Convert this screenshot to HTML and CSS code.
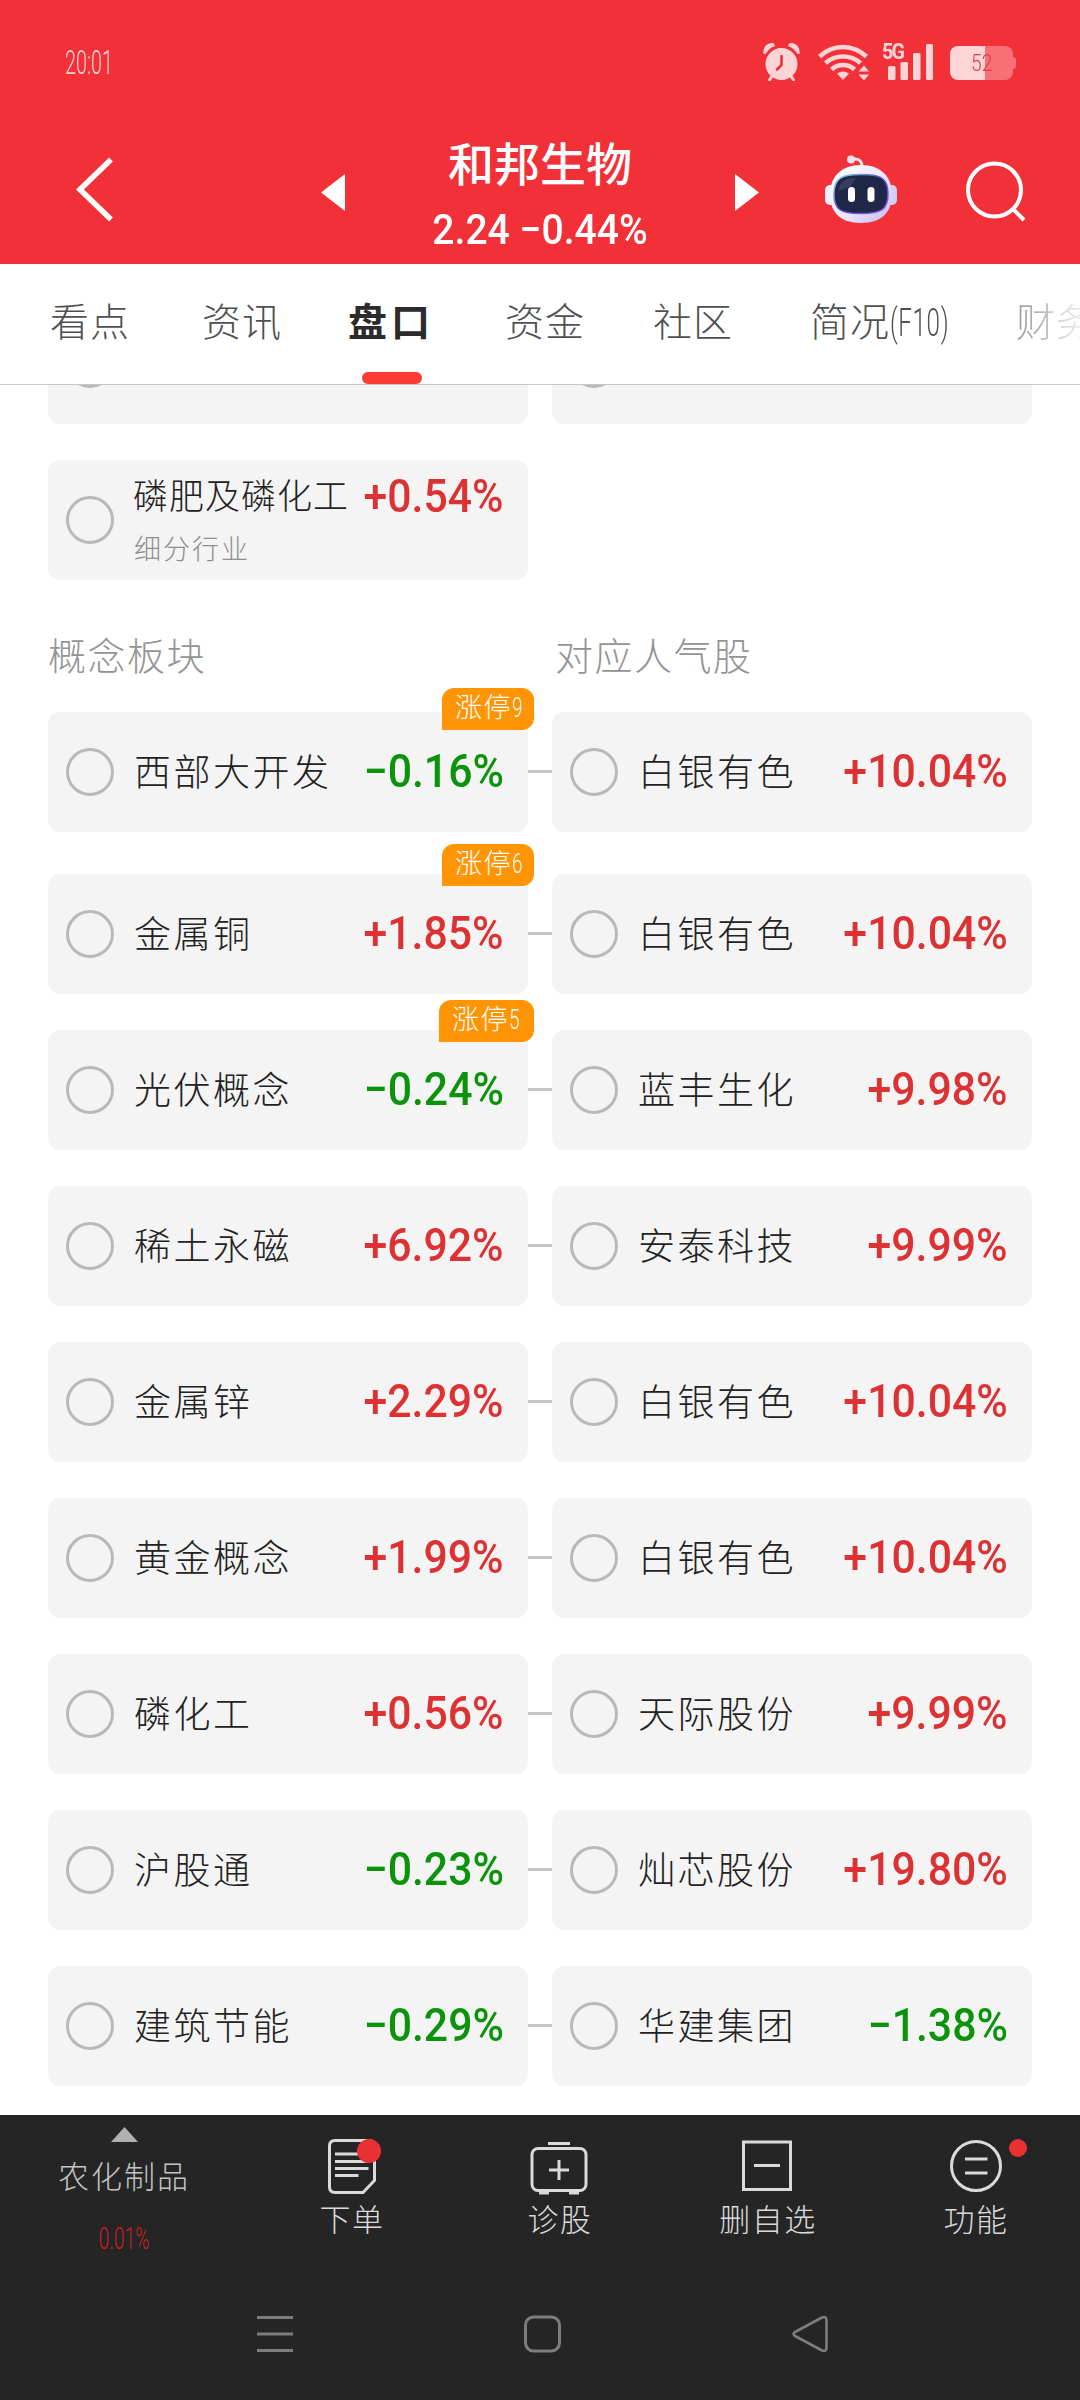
FILE: index.html
```html
<!DOCTYPE html>
<html lang="zh-CN">
<head>
<meta charset="utf-8">
<title>和邦生物</title>
<link rel="stylesheet" href="styles.css">
</head>
<body>
<div class="screen">
  <header class="header">
    <div class="status">
      <div class="time"><span class="narrow">20:01</span></div>
      <div class="status-icons">
        <svg class="alarm" width="37" height="38" viewBox="0 0 37 38" fill="#fdd5d7">
          <circle cx="18.5" cy="21" r="16"/>
          <path d="M1 10Q1 1 10 .5L11 2.500Q5 5 2.500 10ZM36 10Q36 1 27 .5L26 2.500Q32 5 34.500 10Z" stroke="#fdd5d7" stroke-width="1.500"/>
          <path d="M9 33 6.500 37M28 33 30.500 37" stroke="#fdd5d7" stroke-width="3" stroke-linecap="round"/>
          <path d="M18.500 13V22L14 26.500" fill="none" stroke="#f23037" stroke-width="2.600" stroke-linecap="round" stroke-linejoin="round"/>
        </svg>
        <svg class="wifi" width="51" height="37" viewBox="0 0 51 37" fill="none" stroke="#fdd5d7" stroke-width="4.600">
          <path d="M1.500 12.500Q12 3 25 3T48.500 12.500M7.500 19Q15 12.500 25 12.500T42.500 19M13.500 25.500Q18 21 25 21T36.500 25.500"/>
          <path d="M19 29.500Q25 25.500 31 29.500L25 36Z" fill="#fdd5d7" stroke="none"/>
          <path d="M40.500 27.500 46 21.500 51 27.500ZM40.500 30.500 46 36.500 51 30.500Z" fill="#fdd5d7" stroke="none"/>
        </svg>
        <div class="signal">
          <span class="net">5G</span>
          <svg width="45" height="36" viewBox="0 0 45 36" fill="#fdd5d7">
            <rect y="22" width="7.500" height="14" rx="1.500"/><rect x="12.500" y="18" width="7.500" height="18" rx="1.500"/><rect x="25" y="9" width="7.500" height="27" rx="1.500"/><rect x="38" width="7" height="36" rx="1.500"/>
          </svg>
        </div>
        <div class="battery"><span class="narrow">52</span></div>
      </div>
    </div>
    <div class="titlebar">
      <svg class="back" width="40" height="68" viewBox="0 0 40 68" fill="none" stroke="#fff" stroke-width="5.500"><path d="M36 3.500 5 33.500 36 63.500"/></svg>
      <svg class="prev" width="24" height="37" viewBox="0 0 24 37" fill="#fff"><path d="M24 0V37L0 18.500Z"/></svg>
      <div class="title">
        <h1>和邦生物</h1>
        <p>2.24 −0.44%</p>
      </div>
      <svg class="next" width="24" height="37" viewBox="0 0 24 37" fill="#fff"><path d="M0 0V37L24 18.500Z"/></svg>
      <svg class="robot" width="72" height="70" viewBox="0 0 72 70">
        <defs>
          <linearGradient id="shell" x1="0" y1="0" x2="1" y2="1"><stop offset="0" stop-color="#fff"/><stop offset=".55" stop-color="#ece8fb"/><stop offset="1" stop-color="#c0b9ed"/></linearGradient>
          <linearGradient id="rim" x1="0" y1="0" x2="1" y2="1"><stop offset="0" stop-color="#8fe0f5"/><stop offset=".5" stop-color="#5949c9"/><stop offset="1" stop-color="#9a55e0"/></linearGradient>
        </defs>
        <path d="M28 5Q37 4 37 13" fill="none" stroke="#efeaf8" stroke-width="3"/>
        <circle cx="26" cy="5.500" r="4" fill="#f8dfe8"/>
        <rect x="0" y="31" width="12" height="20" rx="5" fill="#f1efff"/><rect x="60" y="31" width="12" height="20" rx="5" fill="#d3cff3"/>
        <path d="M36 11C57 11 67 24 67 40C67 58 57 69 36 69S5 58 5 40C5 24 15 11 36 11Z" fill="url(#shell)"/>
        <path d="M36 20.500C54 20.500 63 23 63 40C63 56 56 59.500 36 59.500S9 56 9 40C9 23 18 20.500 36 20.500Z" fill="#1f2848" stroke="url(#rim)" stroke-width="1.500"/>
        <path d="M13 37Q15 24 31 24L25 33Q18 35 13 37Z" fill="#4a526f" opacity=".55"/>
        <rect x="23" y="33" width="7" height="15" rx="3.500" fill="#fff"/><rect x="42.500" y="33" width="7" height="15" rx="3.500" fill="#fff"/>
      </svg>
      <svg class="search" width="60" height="62" viewBox="0 0 60 62" fill="none" stroke="#fff" stroke-width="4"><circle cx="28.500" cy="30" r="26.500"/><path d="M47 49 58 60"/></svg>
    </div>
  </header>

  <nav class="tabs">
    <a>看点</a><a>资讯</a><a class="active">盘口</a><a>资金</a><a>社区</a><a>简况<span class="narrow f10">(F10)</span></a><a class="fade">财务</a>
  </nav>

  <main class="content">
    <div class="row clipped"><div class="card"><i class="radio"></i></div><div class="card"><i class="radio"></i></div></div>
    <div class="row industry">
      <div class="card">
        <i class="radio"></i>
        <div class="info">
          <div class="line"><span class="name small">磷肥及磷化工</span><span class="pct up">+0.54%</span></div>
          <span class="sub">细分行业</span>
        </div>
      </div>
    </div>
    <div class="heads"><h2>概念板块</h2><h2>对应人气股</h2></div>

    <div class="row linked first"><div class="card"><i class="radio"></i><span class="name">西部大开发</span><span class="pct down">−0.16%</span><b class="badge">涨停<span class="narrow">9</span></b></div><div class="card"><i class="radio"></i><span class="name">白银有色</span><span class="pct up">+10.04%</span></div></div>
    <div class="row linked"><div class="card"><i class="radio"></i><span class="name">金属铜</span><span class="pct up">+1.85%</span><b class="badge high">涨停<span class="narrow">6</span></b></div><div class="card"><i class="radio"></i><span class="name">白银有色</span><span class="pct up">+10.04%</span></div></div>
    <div class="row linked"><div class="card"><i class="radio"></i><span class="name">光伏概念</span><span class="pct down">−0.24%</span><b class="badge high wide">涨停<span class="narrow">5</span></b></div><div class="card"><i class="radio"></i><span class="name">蓝丰生化</span><span class="pct up">+9.98%</span></div></div>
    <div class="row linked"><div class="card"><i class="radio"></i><span class="name">稀土永磁</span><span class="pct up">+6.92%</span></div><div class="card"><i class="radio"></i><span class="name">安泰科技</span><span class="pct up">+9.99%</span></div></div>
    <div class="row linked"><div class="card"><i class="radio"></i><span class="name">金属锌</span><span class="pct up">+2.29%</span></div><div class="card"><i class="radio"></i><span class="name">白银有色</span><span class="pct up">+10.04%</span></div></div>
    <div class="row linked"><div class="card"><i class="radio"></i><span class="name">黄金概念</span><span class="pct up">+1.99%</span></div><div class="card"><i class="radio"></i><span class="name">白银有色</span><span class="pct up">+10.04%</span></div></div>
    <div class="row linked"><div class="card"><i class="radio"></i><span class="name">磷化工</span><span class="pct up">+0.56%</span></div><div class="card"><i class="radio"></i><span class="name">天际股份</span><span class="pct up">+9.99%</span></div></div>
    <div class="row linked"><div class="card"><i class="radio"></i><span class="name">沪股通</span><span class="pct down">−0.23%</span></div><div class="card"><i class="radio"></i><span class="name">灿芯股份</span><span class="pct up">+19.80%</span></div></div>
    <div class="row linked"><div class="card"><i class="radio"></i><span class="name">建筑节能</span><span class="pct down">−0.29%</span></div><div class="card"><i class="radio"></i><span class="name">华建集团</span><span class="pct down">−1.38%</span></div></div>
  </main>

  <footer class="toolbar">
    <div class="sector">
      <svg width="27" height="15" viewBox="0 0 27 15"><path d="M13.500 0 27 15H0Z" fill="#b0b0b0"/></svg>
      <span class="sector-name">农化制品</span>
      <span class="sector-pct"><span class="narrow">0.01%</span></span>
    </div>
    <div class="tool order">
      <svg width="54" height="58" viewBox="0 0 54 58" fill="none" stroke="#dadada" stroke-width="3"><path d="M8 3.500H42Q47.500 3.500 47.500 9V43.500L36 55.500H8Q2.500 55.500 2.500 50V9Q2.500 3.500 8 3.500Z"/><path d="M8 17H38M8 24.500H42M8 31.500H41.500M8 38.500H31.500"/><circle cx="42" cy="14" r="12" fill="#e93033" stroke="none"/></svg>
      <span>下单</span>
    </div>
    <div class="tool diagnose">
      <svg width="58" height="58" viewBox="0 0 58 58" fill="none" stroke="#dadada" stroke-width="3"><rect x="2" y="11.500" width="54" height="42" rx="6"/><path d="M18 6.500H40M29 23V43M19 33H39"/><path d="M9 55.500H19M39 55.500H49" stroke-width="4"/></svg>
      <span>诊股</span>
    </div>
    <div class="tool remove">
      <svg width="50" height="58" viewBox="0 0 50 58" fill="none" stroke="#dadada" stroke-width="3"><path d="M1.500 5H48.500V52.500H1.500ZM12 28.500H38"/></svg>
      <span>删自选</span>
    </div>
    <div class="tool features">
      <svg width="52" height="58" viewBox="0 0 52 58" fill="none" stroke="#dadada" stroke-width="3"><circle cx="26" cy="29" r="24.500"/><path d="M15 22H37.500M15 36H37.500"/></svg>
      <span>功能</span>
      <i class="dot"></i>
    </div>
  </footer>
  <div class="sysnav">
    <svg width="36" height="38" viewBox="0 0 36 38" stroke="#7d7d7d" stroke-width="3"><path d="M0 2.500H36M0 19H36M0 35.500H36"/></svg>
    <svg width="37" height="38" viewBox="0 0 37 38" fill="none" stroke="#7d7d7d" stroke-width="3"><rect x="1.500" y="2" width="34" height="34" rx="8"/></svg>
    <svg width="37" height="38" viewBox="0 0 37 38" fill="none" stroke="#7d7d7d" stroke-width="2.600" stroke-linejoin="round"><path d="M3 17 30 2.500Q34.500 1 34.500 5V33Q34.500 37 30 35.500L3 21Q0 19 3 17Z"/></svg>
  </div>
</div>
</body>
</html>
```
FILE: styles.css
```css
* { box-sizing: border-box; }
body { margin: 0; background: #fff; font-family: Roboto, "Noto Sans CJK SC", sans-serif; }
h1, h2, p { margin: 0; font-weight: 400; }
svg { display: block; flex: none; }

.screen { width: 1080px; height: 2400px; display: flex; flex-direction: column; overflow: hidden; }
.narrow { display: inline-block; transform: scaleX(.55); transform-origin: 0 50%; white-space: nowrap; font-weight: 300; }

/* Header */
.header { height: 264px; flex: none; background: #f23037; color: #fff; }
.status { height: 124px; padding: 0 64px 0 65px; display: flex; justify-content: space-between; align-items: center; }
.time { width: 60px; font-size: 34px; color: #fdd5d7; }
.time .narrow { transform: scaleX(.58); }
.status-icons { display: flex; align-items: center; }
.wifi { margin-left: 18px; }
.signal { width: 51px; margin-left: 13px; display: grid; justify-items: end; }
.signal > * { grid-area: 1 / 1; }
.net { justify-self: start; margin-top: -3px; font-size: 22px; line-height: 22px; font-weight: 700; letter-spacing: -2px; color: #fdd5d7; transform: scaleX(.9); transform-origin: 0 50%; }
.battery { width: 63px; height: 34px; margin: 2px 3px 0 17px; border-radius: 8px; background: linear-gradient(90deg, #fdd5d7 35px, #f87076 35px); position: relative; color: #e23a42; font-size: 24px; line-height: 34px; padding-left: 21px; }
.battery .narrow { transform: scaleX(.8); }
.battery::after { content: ""; position: absolute; right: -3px; top: 11px; width: 3px; height: 12px; background: #f87076; border-radius: 0 3px 3px 0; }
.titlebar { height: 140px; display: flex; align-items: flex-start; padding: 0 54px 0 75px; }
.back { margin-top: 32px; }
.prev { margin: 50px 0 0 206px; }
.title { width: 390px; text-align: center; }
.title h1 { font-size: 46px; line-height: 60px; margin-top: 11px; font-weight: 500; }
.title p { font-size: 42px; line-height: 50px; margin-top: 10px; font-weight: 500; transform: scaleX(.93); }
.next { margin-top: 50px; }
.robot { margin: 30px 0 0 66px; }
.search { margin: 36px 0 0 69px; }

/* Tabs */
.tabs { height: 121px; flex: none; display: grid; grid-template-columns: 152px 146px 157px 148px 157px 206px 80px; padding-left: 50px; line-height: 119px; font-size: 39px; font-weight: 300; color: #505050; border-bottom: 1px solid #c8c8c8; white-space: nowrap; overflow: hidden; letter-spacing: 1px; }
.tabs .active { color: #2b2b2b; font-weight: 700; letter-spacing: 4px; display: flex; flex-direction: column; height: 120px; }
.tabs .active::after { content: ""; width: 60px; height: 12px; margin: -11px 0 0 14px; border-radius: 6px; background: #fa3c32; flex: none; }
.f10 { transform: scaleX(.62); }
.fade { color: transparent; background: linear-gradient(90deg, #999, #eee 65px); background-clip: text; -webkit-background-clip: text; }

/* Boards */
.content { height: 1730px; flex: none; overflow: hidden; padding: 0 48px; }
.row { display: grid; grid-template-columns: 480px 480px; column-gap: 24px; margin-top: 36px; }
.row.clipped { margin-top: -81px; }
.card { position: relative; height: 120px; border-radius: 12px; background: #f4f4f4; display: flex; align-items: center; padding: 0 24px 0 18px; }
.radio { width: 48px; height: 48px; flex: none; border: 3px solid #b9b9b9; border-radius: 50%; }
.name { margin: -5px 0 0 20px; font-size: 37px; font-weight: 300; letter-spacing: 2.5px; color: #222; white-space: nowrap; }
.name.small { margin: -7px 0 0 -1px; font-size: 35px; letter-spacing: 1px; }
.pct { margin-left: auto; font-size: 46px; line-height: 54px; font-weight: 500; margin-top: -3px; white-space: nowrap; transform: scaleX(.93); transform-origin: 100% 50%; }
.up { color: #dc3234; }
.down { color: #0c930c; }
.info { flex: 1; margin-left: 20px; height: 120px; padding-top: 11px; }
.line { display: flex; align-items: center; height: 52px; }
.sub { display: block; font-size: 27px; line-height: 32px; margin-top: 11px; letter-spacing: 2px; font-weight: 300; color: #8e8e8e; }
.heads { display: grid; grid-template-columns: 507px 1fr; height: 108px; line-height: 108px; margin-top: 24px; }
.heads h2 { font-size: 38px; font-weight: 300; letter-spacing: 1.5px; color: #949494; line-height: 106px; }
.row.first { margin-top: 0; }
.row.first + .row { margin-top: 42px; }
.linked .card:first-child::after { content: ""; position: absolute; left: 480px; top: 58px; width: 24px; height: 3px; background: #c6c6c6; }
.badge { position: absolute; right: -6px; top: -24px; width: 92px; height: 42px; padding-left: 13px; border-radius: 12px 12px 12px 0; background: #ff9504; color: #fff; font-size: 27px; line-height: 41px; font-weight: 300; letter-spacing: 1.5px; white-space: nowrap; overflow: hidden; }
.badge.high { top: -30px; }
.badge.wide { width: 95px; }
.badge .narrow { transform: scaleX(.7); }

/* Bottom bars */
.toolbar { height: 170px; flex: none; background: #252525; color: #dadada; font-size: 31px; line-height: 40px; font-weight: 300; display: flex; position: relative; }
.toolbar span { white-space: nowrap; }
.sector { width: 248px; padding-top: 12px; display: flex; flex-direction: column; align-items: center; color: #c4c4c4; }
.sector-name { margin-top: 16px; letter-spacing: 2px; }
.sector-pct { width: 50px; margin-top: 20px; font-size: 32px; line-height: 40px; color: #d3201f; }
.sector-pct .narrow { transform: scaleX(.6); }
.tool { display: flex; flex-direction: column; align-items: center; padding-top: 22px; letter-spacing: 1.5px; position: relative; }
.tool span { margin-top: 6px; }
.order { width: 208px; }
.order svg { margin-left: 3px; }
.diagnose { width: 208px; }
.diagnose svg { margin-right: 2px; }
.remove { width: 208px; }
.remove svg { margin-right: 2px; }
.features { width: 208px; }
.dot { position: absolute; left: 137px; top: 24px; width: 18px; height: 18px; border-radius: 50%; background: #e93033; }
.sysnav { height: 115px; flex: none; background: #252525; display: flex; align-items: flex-start; gap: 231px; padding: 30px 0 0 257px; }
```
